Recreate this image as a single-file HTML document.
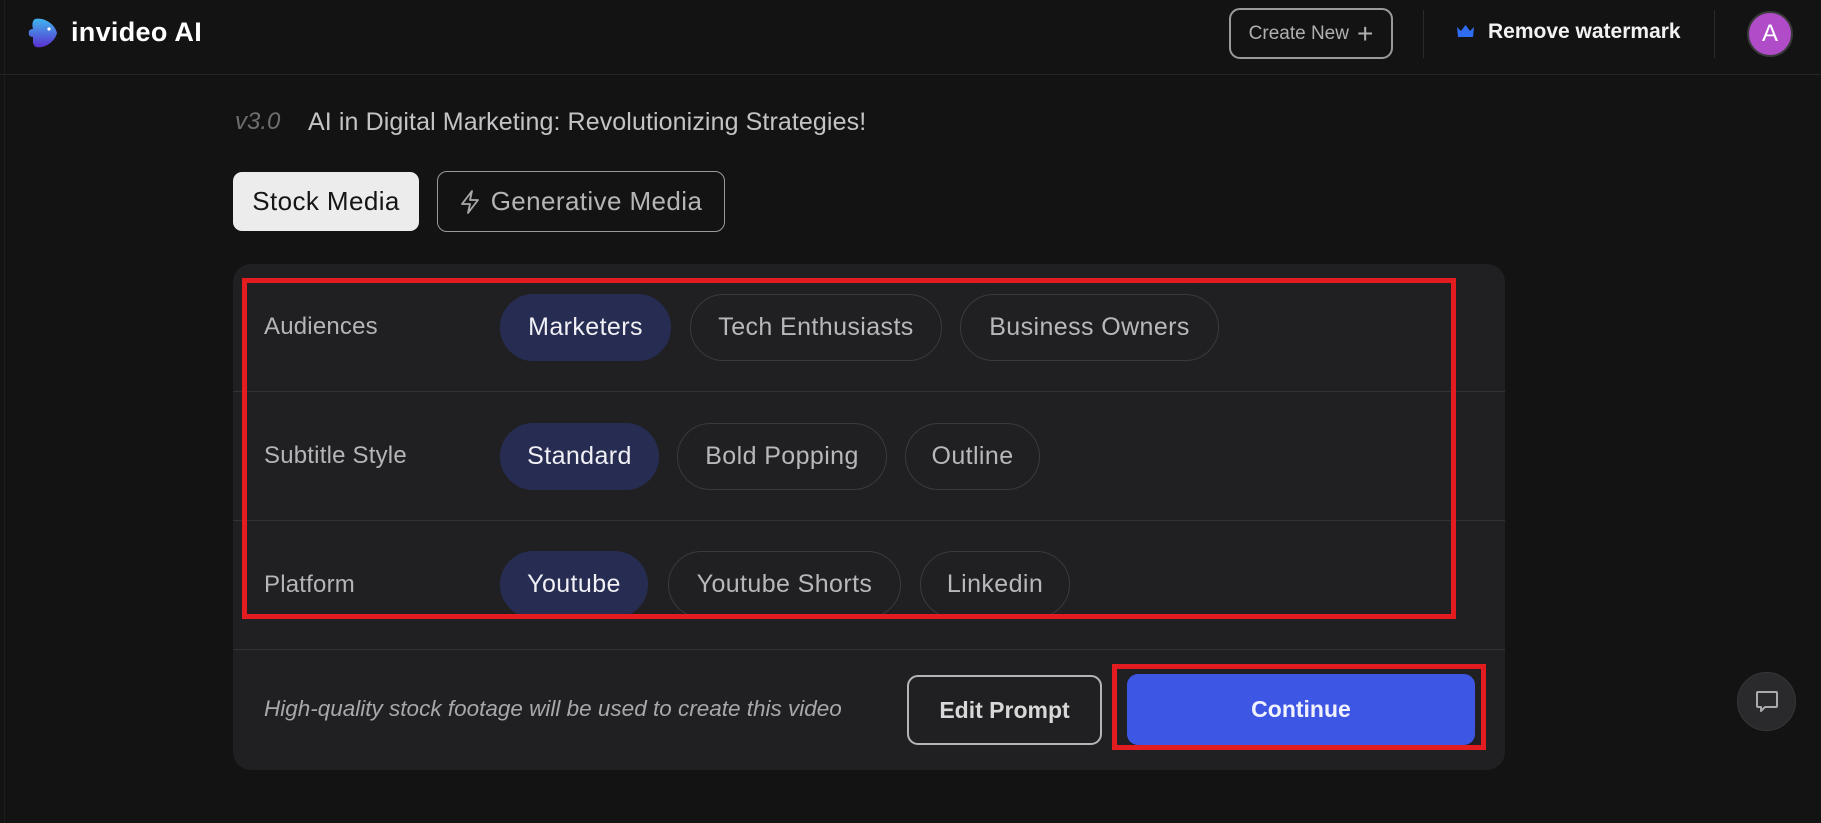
<!DOCTYPE html>
<html><head><meta charset="utf-8"><style>
*{box-sizing:border-box;margin:0;padding:0}
body{width:1821px;height:823px;background:#131313;font-family:"Liberation Sans",sans-serif;position:relative;overflow:hidden;color:#ddd}
.a{position:absolute}
.pill{position:absolute;height:67px;border-radius:34px;border:1px solid #3a3a3d;color:#b8b8bb;font-size:25px;display:flex;align-items:center;justify-content:center;letter-spacing:0.4px}
.sel{background:#272d52;border-color:#272d52;color:#f0f0f5}
.lbl{position:absolute;left:264px;font-size:24px;color:#b5b5b8;letter-spacing:0.2px}
.hr{position:absolute;left:233px;width:1272px;height:1px;background:#333336}
</style></head><body>
<div class="a" style="left:0;top:74px;width:1821px;height:1px;background:#262626"></div>
<div class="a" style="left:4px;top:0;width:1px;height:823px;background:#1d1d1d"></div>
<!-- logo -->
<svg class="a" style="left:27px;top:16px" width="32" height="34" viewBox="0 0 32 34">
<defs><linearGradient id="g" x1="0" y1="0" x2="0" y2="1"><stop offset="0" stop-color="#3fb6f0"/><stop offset="1" stop-color="#5b2fd0"/></linearGradient></defs>
<path d="M8 3C17 1 28 8 30 17C28 26 17 33 9 31C5 29 6 24 6 21C3 21 1 19 2 17C1 15 3 13 6 13C5 9 5 5 8 3Z" fill="url(#g)"/>
<circle cx="22" cy="13" r="1.6" fill="#fff"/>
</svg>
<div class="a" style="left:71px;top:17px;font-size:27px;font-weight:bold;color:#fff;letter-spacing:0.3px">invideo AI</div>
<!-- header right -->
<div class="a" style="left:1229px;top:8px;width:164px;height:51px;border:2px solid #9a9a9a;border-radius:11px;color:#b0b0b0;font-size:19px;display:flex;align-items:center;justify-content:center">Create New <span style="font-size:28px;margin-left:8px;font-weight:300">+</span></div>
<div class="a" style="left:1423px;top:10px;width:1px;height:48px;background:#2a2a2a"></div>
<svg class="a" style="left:1456px;top:24px" width="19" height="16" viewBox="0 0 19 16"><path d="M1 3L5 7L9.5 1L14 7L18 3L17 13H2Z" fill="#2f6df0"/></svg>
<div class="a" style="left:1488px;top:20px;font-size:21px;font-weight:bold;color:#f2f2f2">Remove watermark</div>
<div class="a" style="left:1714px;top:10px;width:1px;height:48px;background:#2a2a2a"></div>
<div class="a" style="left:1747px;top:11px;width:46px;height:46px;border-radius:50%;background:#b04cc8;border:2px solid #3a3a3a;color:#fff;font-size:24px;display:flex;align-items:center;justify-content:center">A</div>
<!-- title -->
<div class="a" style="left:235px;top:108px;font-size:24px;font-style:italic;color:#6e6e70">v3.0</div>
<div class="a" style="left:308px;top:108px;font-size:25px;color:#c4c4c6;letter-spacing:0.1px">AI in Digital Marketing: Revolutionizing Strategies!</div>
<!-- tabs -->
<div class="a" style="left:233px;top:172px;width:186px;height:59px;border-radius:9px;background:#ececec;color:#151515;font-size:26px;display:flex;align-items:center;justify-content:center;letter-spacing:0.4px">Stock Media</div>
<div class="a" style="left:437px;top:171px;width:288px;height:61px;border-radius:10px;border:1px solid #9a9a9a;color:#b5b5b8;font-size:26px;display:flex;align-items:center;justify-content:center;letter-spacing:0.4px">
<svg width="20" height="26" viewBox="0 0 20 26" style="margin-right:11px"><path d="M12 2L2 15H10L8 24L18 11H10Z" fill="none" stroke="#aaa" stroke-width="1.8" stroke-linejoin="round"/></svg>Generative Media</div>
<!-- panel -->
<div class="a" style="left:233px;top:264px;width:1272px;height:506px;border-radius:18px;background:#202022"></div>
<div class="hr" style="top:391px"></div>
<div class="hr" style="top:520px"></div>
<div class="hr" style="top:649px"></div>
<div class="lbl" style="top:313px">Audiences</div>
<div class="pill sel" style="left:500px;top:294px;width:171px">Marketers</div>
<div class="pill" style="left:690px;top:294px;width:252px">Tech Enthusiasts</div>
<div class="pill" style="left:960px;top:294px;width:259px">Business Owners</div>
<div class="lbl" style="top:442px">Subtitle Style</div>
<div class="pill sel" style="left:500px;top:423px;width:159px">Standard</div>
<div class="pill" style="left:677px;top:423px;width:210px">Bold Popping</div>
<div class="pill" style="left:905px;top:423px;width:135px">Outline</div>
<div class="lbl" style="top:571px">Platform</div>
<div class="a" style="left:490px;top:540px;width:600px;height:77px;overflow:hidden">
<div class="pill sel" style="left:10px;top:11px;width:148px">Youtube</div>
<div class="pill" style="left:178px;top:11px;width:233px">Youtube Shorts</div>
<div class="pill" style="left:430px;top:11px;width:150px">Linkedin</div>
</div>
<div class="a" style="left:242px;top:278px;width:1214px;height:341px;border:5px solid #e21c1f"></div>
<!-- footer -->
<div class="a" style="left:264px;top:696px;font-size:22.5px;font-style:italic;color:#a8a8ab">High-quality stock footage will be used to create this video</div>
<div class="a" style="left:907px;top:675px;width:195px;height:70px;border:2px solid #b5b5b5;border-radius:11px;color:#d8d8d8;font-size:23px;font-weight:bold;display:flex;align-items:center;justify-content:center">Edit Prompt</div>
<div class="a" style="left:1127px;top:674px;width:348px;height:71px;border-radius:11px;background:#3d57e4;color:#f2f2ff;font-size:23px;font-weight:bold;display:flex;align-items:center;justify-content:center">Continue</div>
<div class="a" style="left:1112px;top:664px;width:374px;height:86px;border:5px solid #e21c1f"></div>
<!-- chat -->
<div class="a" style="left:1737px;top:672px;width:59px;height:59px;border-radius:50%;background:#2a2a2c;border:1px solid #363638;display:flex;align-items:center;justify-content:center">
<svg width="26" height="26" viewBox="0 0 26 26"><path d="M4 3H22Q23 3 23 4V17Q23 18 22 18H11L7 22V18H4Q3 18 3 17V4Q3 3 4 3Z" fill="none" stroke="#aaa" stroke-width="2" stroke-linejoin="round"/></svg></div>
</body></html>
